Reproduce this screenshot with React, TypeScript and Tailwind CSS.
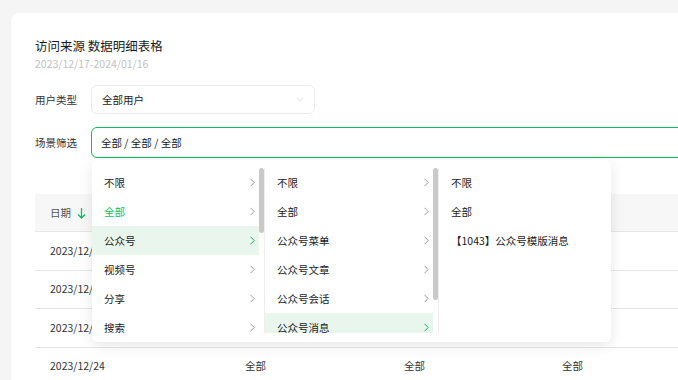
import { ChevronDown } from "lucide-react";

const font = { fontFamily: '"Noto Sans CJK SC", "Noto Sans", sans-serif' };

const col1 = ["不限", "全部", "公众号", "视频号", "分享", "搜索", "小程序", "其他"];
const col2 = ["不限", "全部", "公众号菜单", "公众号文章", "公众号会话", "公众号消息", "公众号主页"];
const col3 = ["不限", "全部", "【1043】公众号模版消息"];

const rows = ["2023/12/27", "2023/12/26", "2023/12/25", "2023/12/24"];

function Chevron({ active }: { active?: boolean }) {
  return (
    <svg width="5" height="9" viewBox="0 0 5 9" fill="none">
      <polyline
        points="0.5,0.8 4.2,4.5 0.5,8.2"
        stroke={active ? "#07c160" : "#9a9a9a"}
        strokeWidth="1"
      />
    </svg>
  );
}

function CascadePanel() {
  return (
    <div className="absolute left-[1px] top-[33px] z-10 w-[519px] h-[182px] bg-white rounded-md shadow-[0_3px_14px_rgba(0,0,0,0.1)] py-[8px] flex">
      <div className="flex w-[173px] h-[165px] border-r border-[#eeeeee]">
        <div className="w-[167px] h-full overflow-hidden">
          {col1.map((t, i) => (
            <div
              key={t}
              className={`h-[29px] flex items-center justify-between pl-[12px] pr-[4px] ${
                i === 2 ? "bg-[#e8f6ee]" : ""
              } ${i === 1 ? "text-[#07c160]" : "text-[#1a1a1a]"}`}
            >
              <span>{t}</span>
              <Chevron active={i === 2} />
            </div>
          ))}
        </div>
        <div className="w-[5px] h-full">
          <div className="w-[5px] h-[65px] rounded-full bg-[#c9c9c9]" />
        </div>
      </div>
      <div className="flex w-[174px] h-[165px] border-r border-[#eeeeee]">
        <div className="w-[168px] h-full overflow-hidden">
          {col2.map((t, i) => (
            <div
              key={t}
              className={`h-[29px] flex items-center justify-between pl-[12px] pr-[4px] text-[#1a1a1a] ${
                i === 5 ? "bg-[#e8f6ee]" : ""
              }`}
            >
              <span>{t}</span>
              <Chevron active={i === 5} />
            </div>
          ))}
        </div>
        <div className="w-[5px] h-full">
          <div className="w-[5px] h-[132px] rounded-full bg-[#c9c9c9]" />
        </div>
      </div>
      <div className="flex-1 h-[165px] overflow-hidden">
        {col3.map((t) => (
          <div key={t} className="h-[29px] flex items-center pl-[12px] text-[#1a1a1a]">
            {t}
          </div>
        ))}
      </div>
    </div>
  );
}

export default function App() {
  return (
    <div
      className="w-[678px] h-[380px] overflow-hidden bg-[#f5f5f5] text-[10.5px]"
      style={font}
    >
      <div className="ml-[11px] mt-[13px] w-[760px] h-[420px] bg-white rounded-tl-[8px] pl-[24px] pt-[24px]">
        <div className="text-[12.5px] leading-[18px] text-[#1a1a1a]">访问来源 数据明细表格</div>
        <div className="mt-[1px] text-[10.5px] leading-[16px] text-[#c2c2c2]">2023/12/17-2024/01/16</div>

        <div className="mt-[13px] flex items-center">
          <div className="w-[56px] text-[#333333]">用户类型</div>
          <div className="w-[224px] h-[29px] border border-[#ececec] rounded-[6px] flex items-center justify-between pl-[10px] pr-[9px] text-[#1a1a1a]">
            <span>全部用户</span>
            <ChevronDown className="w-[11px] h-[11px] text-[#cfcfcf]" strokeWidth={1.5} />
          </div>
        </div>

        <div className="mt-[13px] flex items-center">
          <div className="w-[56px] text-[#333333]">场景筛选</div>
          <div className="relative">
            <div className="w-[640px] h-[31px] border border-[#07c160] rounded-[6px] flex items-center pl-[9px] text-[#1a1a1a]">
              全部 / 全部 / 全部
            </div>
            <CascadePanel />
          </div>
        </div>

        <div className="mt-[36px] w-[700px]">
          <div className="h-[38px] bg-[#f7f7f7] border-b border-[#e6e6e6] flex items-center">
            <div className="w-[195px] pl-[15px] flex items-center gap-[6px] text-[#555555]">
              <span>日期</span>
              <svg width="9" height="12" viewBox="0 0 9 12" fill="none">
                <path d="M4.5 1v10M1 7.5l3.5 3.5L8 7.5" stroke="#07c160" strokeWidth="1.3" />
              </svg>
              <svg width="11" height="11" viewBox="0 0 11 11" fill="none">
                <circle cx="5.5" cy="5.5" r="4.6" stroke="#07c160" strokeWidth="1.2" />
              </svg>
            </div>
            <div className="w-[159px] pl-[15px] text-[#555555]">一级场景</div>
            <div className="w-[158px] pl-[15px] text-[#555555]">二级场景</div>
            <div className="flex-1 pl-[15px] text-[#555555]">三级场景</div>
          </div>
          {rows.map((d) => (
            <div key={d} className="h-[38.5px] border-b border-[#e6e6e6] flex items-center text-[#333333]">
              <div className="w-[195px] pl-[15px]">{d}</div>
              <div className="w-[159px] pl-[15px]">全部</div>
              <div className="w-[158px] pl-[15px]">全部</div>
              <div className="flex-1 pl-[15px]">全部</div>
            </div>
          ))}
        </div>
      </div>
    </div>
  );
}
